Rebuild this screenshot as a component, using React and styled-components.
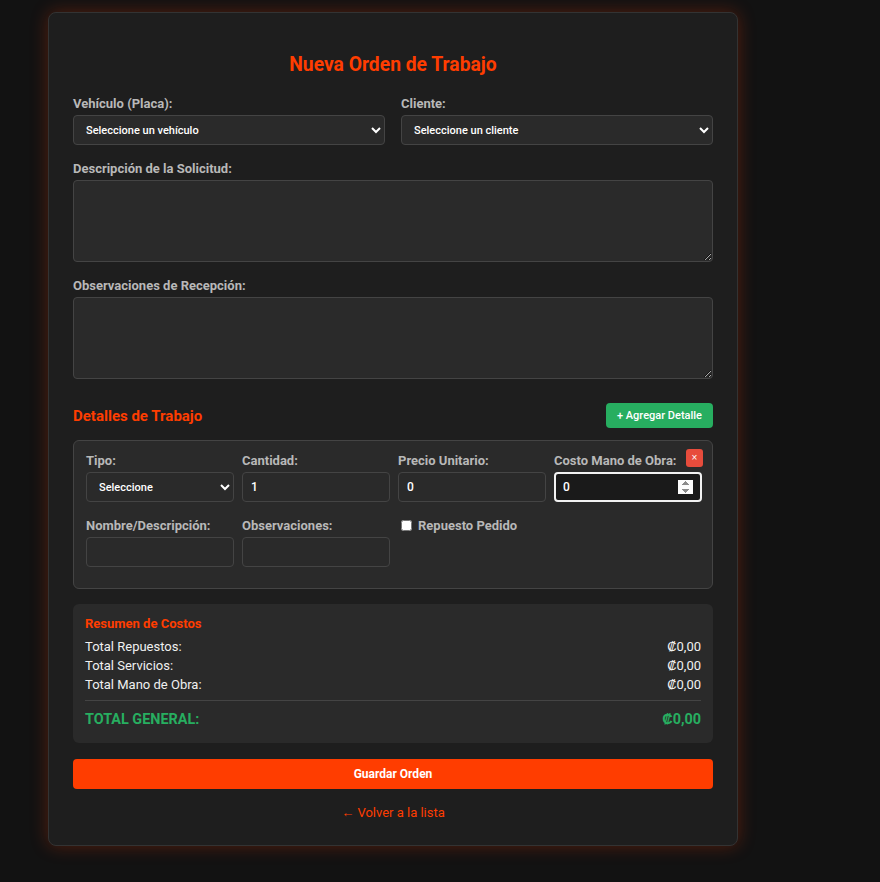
import React from 'react';
import styled, { createGlobalStyle, css } from 'styled-components';

const GlobalStyle = createGlobalStyle`
  body {
    margin: 0;
    background-color: #121212;
    font-family: Roboto, 'Liberation Sans', sans-serif;
    color: #eee;
  }
`;

const Page = styled.div`
  padding: 12px 48px 36px;
`;

const Card = styled.div`
  width: 640px;
  padding: 24px;
  background-color: #1e1e1e;
  border: 1px solid #333;
  border-radius: 8px;
  box-shadow: 0 0 18px rgba(255, 61, 0, 0.28);
`;

const Title = styled.h2`
  margin: 16px 0 20px;
  text-align: center;
  color: #ff3d00;
  font-size: 19.3px;
  font-weight: 700;
  line-height: 23px;
`;

const Row = styled.div`
  display: grid;
  grid-template-columns: 1fr 1fr;
  gap: 16px;
`;

const Group = styled.div`
  margin-bottom: 16px;
`;

const Label = styled.label`
  display: block;
  margin-bottom: 4px;
  color: #b8b8b8;
  font-size: 13px;
  font-weight: 700;
  line-height: 15px;
`;

const fieldBase = css`
  box-sizing: border-box;
  width: 100%;
  background-color: #2a2a2a;
  border: 1px solid #444;
  border-radius: 4px;
  color: #fff;
  font-family: Roboto, 'Liberation Sans', sans-serif;
  font-size: 11px;
  font-weight: 500;
  outline: none;
`;

const Select = styled.select`
  ${fieldBase}
  height: 30px;
  padding: 0 6px 0 8px;
`;

const Input = styled.input`
  ${fieldBase}
  height: 30px;
  padding: 0 8px;
  font-size: 12px;
  &::-webkit-inner-spin-button,
  &::-webkit-outer-spin-button {
    opacity: 0;
  }
  ${(p) =>
    p.$active &&
    css`
      background-color: #1a1a1a;
      border: 2px solid #f2f2f2;
      padding: 0 7px;
      &::-webkit-inner-spin-button {
        opacity: 1;
      }
    `}
`;

const TextArea = styled.textarea`
  ${fieldBase}
  display: block;
  height: 82px;
  padding: 8px;
  resize: vertical;
`;

const SectionHead = styled.div`
  display: flex;
  align-items: center;
  justify-content: space-between;
  margin: 24px 0 12px;
`;

const SectionTitle = styled.h3`
  margin: 0;
  color: #ff3d00;
  font-size: 15px;
  font-weight: 700;
`;

const AddButton = styled.button`
  height: 25px;
  padding: 0 11px;
  background-color: #27ae60;
  border: none;
  border-radius: 4px;
  color: #fff;
  font-family: Roboto, 'Liberation Sans', sans-serif;
  font-size: 11px;
  font-weight: 500;
`;

const DetailCard = styled.div`
  position: relative;
  padding: 12px 10px 21px 12px;
  background-color: #2a2a2a;
  border: 1px solid #444;
  border-radius: 6px;
`;

const DetailGrid = styled.div`
  display: grid;
  grid-template-columns: repeat(4, 1fr);
  column-gap: 8px;
  row-gap: 16px;
`;

const Field = styled.div``;

const CheckLabel = styled.label`
  display: flex;
  align-items: center;
  gap: 6px;
  color: #b8b8b8;
  font-size: 13px;
  font-weight: 700;
  line-height: 15px;
  & input {
    margin: 0 0 0 3px;
    width: 11px;
    height: 11px;
  }
`;

const RemoveButton = styled.button`
  position: absolute;
  top: 8px;
  right: 9px;
  width: 17px;
  height: 18px;
  padding: 0;
  background-color: #e74c3c;
  border: none;
  border-radius: 3px;
  color: #fff;
  font-size: 10px;
  line-height: 18px;
`;

const Summary = styled.div`
  margin-top: 15px;
  padding: 12px 12px 14px;
  background-color: #2a2a2a;
  border-radius: 6px;
`;

const SummaryTitle = styled.h4`
  margin: 0 0 6px;
  color: #ff3d00;
  font-size: 13px;
  font-weight: 700;
  line-height: 15px;
`;

const SummaryRow = styled.div`
  display: flex;
  justify-content: space-between;
  color: ${(p) => (p.$total ? '#27ae60' : '#f0f0f0')};
  font-size: ${(p) => (p.$total ? '14.4px' : '13px')};
  font-weight: ${(p) => (p.$total ? 700 : 400)};
  line-height: 19px;
  ${(p) =>
    p.$total &&
    css`
      margin-top: 6px;
      padding-top: 9px;
      border-top: 1px solid #444;
    `}
`;

const SaveButton = styled.button`
  display: block;
  width: 100%;
  height: 30px;
  margin-top: 16px;
  background-color: #ff3d00;
  border: none;
  border-radius: 4px;
  color: #fff;
  font-family: Roboto, 'Liberation Sans', sans-serif;
  font-size: 12px;
  font-weight: 700;
`;

const BackLink = styled.a`
  display: block;
  margin: 16px 0 1px;
  text-align: center;
  color: #ff3d00;
  font-size: 13px;
  text-decoration: none;
`;

const totals = [
  { label: 'Total Repuestos:', value: '₡0,00' },
  { label: 'Total Servicios:', value: '₡0,00' },
  { label: 'Total Mano de Obra:', value: '₡0,00' },
];

const App = () => {
  return (
    <>
      <GlobalStyle />
      <Page>
        <Card>
          <Title>Nueva Orden de Trabajo</Title>
          <Row>
            <Group>
              <Label>Vehículo (Placa):</Label>
              <Select defaultValue="">
                <option value="">Seleccione un vehículo</option>
              </Select>
            </Group>
            <Group>
              <Label>Cliente:</Label>
              <Select defaultValue="">
                <option value="">Seleccione un cliente</option>
              </Select>
            </Group>
          </Row>
          <Group>
            <Label>Descripción de la Solicitud:</Label>
            <TextArea />
          </Group>
          <Group>
            <Label>Observaciones de Recepción:</Label>
            <TextArea />
          </Group>

          <SectionHead>
            <SectionTitle>Detalles de Trabajo</SectionTitle>
            <AddButton>+ Agregar Detalle</AddButton>
          </SectionHead>

          <DetailCard>
            <RemoveButton>×</RemoveButton>
            <DetailGrid>
              <Field>
                <Label>Tipo:</Label>
                <Select defaultValue="">
                  <option value="">Seleccione</option>
                </Select>
              </Field>
              <Field>
                <Label>Cantidad:</Label>
                <Input type="number" defaultValue="1" />
              </Field>
              <Field>
                <Label>Precio Unitario:</Label>
                <Input type="number" defaultValue="0" />
              </Field>
              <Field>
                <Label>Costo Mano de Obra:</Label>
                <Input type="number" defaultValue="0" $active />
              </Field>
              <Field>
                <Label>Nombre/Descripción:</Label>
                <Input type="text" />
              </Field>
              <Field>
                <Label>Observaciones:</Label>
                <Input type="text" />
              </Field>
              <Field>
                <CheckLabel>
                  <input type="checkbox" />
                  Repuesto Pedido
                </CheckLabel>
              </Field>
            </DetailGrid>
          </DetailCard>

          <Summary>
            <SummaryTitle>Resumen de Costos</SummaryTitle>
            {totals.map((t) => (
              <SummaryRow key={t.label}>
                <span>{t.label}</span>
                <span>{t.value}</span>
              </SummaryRow>
            ))}
            <SummaryRow $total>
              <span>TOTAL GENERAL:</span>
              <span>₡0,00</span>
            </SummaryRow>
          </Summary>

          <SaveButton>Guardar Orden</SaveButton>
          <BackLink href="#">← Volver a la lista</BackLink>
        </Card>
      </Page>
    </>
  );
};

export default App;
